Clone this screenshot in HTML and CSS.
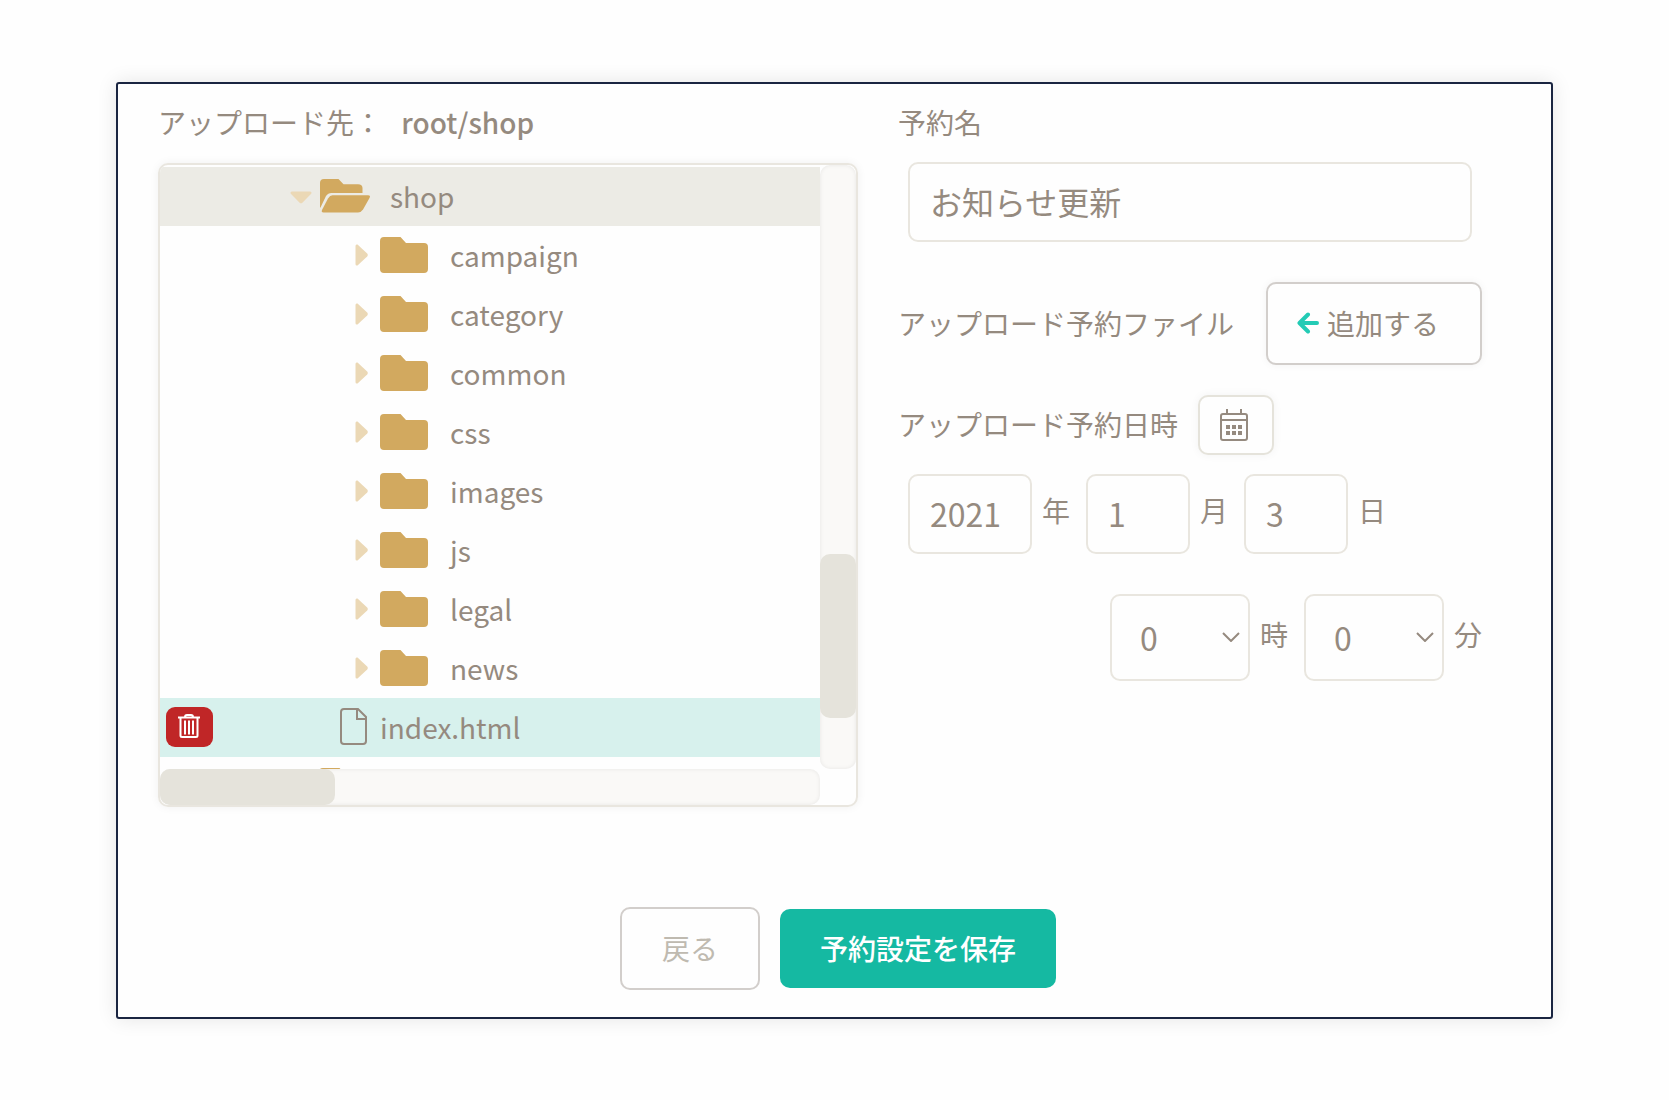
FILE: index.html
```html
<!DOCTYPE html>
<html lang="ja">
<head>
<meta charset="utf-8">
<meta name="viewport" content="width=device-width, initial-scale=1">
<title>アップロード予約</title>
<link rel="stylesheet" href="styles.css">
</head>
<body>
<svg class="sprite" aria-hidden="true">
  <symbol id="folder" viewBox="0 0 48 36"><path d="M4 0H20.500L26 6H44Q48 6 48 10V32Q48 36 44 36H4Q0 36 0 32V4Q0 0 4 0Z"/></symbol>
  <symbol id="folder-open" viewBox="0 0 52 34"><path d="M5 0H19.500L24.500 5.200H39Q43.500 5.200 43.500 9V14H12.500Q9 14 7 17L1.500 28.500Q1 29 1 28V4Q1 0 5 0Z"/><path d="M13.500 16.200H49Q52 16.200 50.500 19L44 30.500Q42 33.500 39 33.500H4.500Q2 33.500 3 31L9 19.500Q11 16.200 13.500 16.200Z"/></symbol>
  <symbol id="caret-right" viewBox="0 0 13 22"><path d="M2.500 .6L12.200 9.600Q13.400 11 12.200 12.400L2.500 21.400Q.5 22 .5 20V2Q.5 0 2.500 .6Z"/></symbol>
  <symbol id="caret-down" viewBox="0 0 22 13"><path d="M.6 2.500L9.600 11.700Q11 13 12.400 11.700L21.400 2.500Q22 .5 20 .5H2Q0 .5 .6 2.500Z"/></symbol>
</svg>
<main class="dialog">
  <form class="form">
    <div class="columns">
      <section class="destination">
        <h1 class="heading">アップロード先： <strong class="path">root/shop</strong></h1>
        <div class="tree">
          <ul class="rows">
            <li class="row row-open"><svg class="caret-down"><use href="#caret-down"/></svg><svg class="folder-open"><use href="#folder-open"/></svg>shop</li>
            <li class="row row-child"><svg class="caret"><use href="#caret-right"/></svg><svg class="folder"><use href="#folder"/></svg>campaign</li>
            <li class="row row-child"><svg class="caret"><use href="#caret-right"/></svg><svg class="folder"><use href="#folder"/></svg>category</li>
            <li class="row row-child"><svg class="caret"><use href="#caret-right"/></svg><svg class="folder"><use href="#folder"/></svg>common</li>
            <li class="row row-child"><svg class="caret"><use href="#caret-right"/></svg><svg class="folder"><use href="#folder"/></svg>css</li>
            <li class="row row-child"><svg class="caret"><use href="#caret-right"/></svg><svg class="folder"><use href="#folder"/></svg>images</li>
            <li class="row row-child"><svg class="caret"><use href="#caret-right"/></svg><svg class="folder"><use href="#folder"/></svg>js</li>
            <li class="row row-child"><svg class="caret"><use href="#caret-right"/></svg><svg class="folder"><use href="#folder"/></svg>legal</li>
            <li class="row row-child"><svg class="caret"><use href="#caret-right"/></svg><svg class="folder"><use href="#folder"/></svg>news</li>
            <li class="row row-file">
              <button type="button" class="delete" aria-label="削除"><svg class="trash" viewBox="0 0 22 24"><path d="M0 3.500H22M7 3Q7 1 9 1H13Q15 1 15 3M2.500 3.500V21.500Q2.500 23 4 23H18Q19.500 23 19.500 21.500V3.500M7 6.500V20.500M11 6.500V20.500M15 6.500V20.500"/></svg></button>
              <svg class="file" viewBox="0 0 27 37"><path d="M4 1H18L26 9V33Q26 36 23 36H4Q1 36 1 33V4Q1 1 4 1ZM17 1V11H26"/></svg>index.html
            </li>
            <li class="row row-next"><svg class="folder"><use href="#folder"/></svg></li>
          </ul>
          <div class="track track-y"><div class="thumb thumb-y"></div></div>
          <div class="track track-x"><div class="thumb thumb-x"></div></div>
        </div>
      </section>
      <section class="settings">
        <label class="heading" for="name">予約名</label>
        <input class="field name" id="name" type="text" value="お知らせ更新">
        <div class="line line-files">
          <span>アップロード予約ファイル</span>
          <button type="button" class="button add"><svg class="arrow" viewBox="0 0 22 22"><path d="M11 2.500L2.500 11L11 19.500M3 11H20"/></svg>追加する</button>
        </div>
        <div class="line line-date">
          <span>アップロード予約日時</span>
          <button type="button" class="calendar" aria-label="カレンダー"><svg class="calendar-icon" viewBox="0 0 28 32"><path class="calendar-frame" d="M3 5H25Q27 5 27 7V29Q27 31 25 31H3Q1 31 1 29V7Q1 5 3 5ZM1 11H27M7 0V5M21 0V5"/><path d="M6 16h4v4h-4zM12 16h4v4h-4zM18 16h4v4h-4zM6 22h4v4h-4zM12 22h4v4h-4zM18 22h4v4h-4z"/></svg></button>
        </div>
        <div class="units units-date">
          <input class="field year" id="year" type="text" value="2021"><label for="year">年</label>
          <input class="field day" id="month" type="text" value="1"><label for="month">月</label>
          <input class="field day" id="day" type="text" value="3"><label for="day">日</label>
        </div>
        <div class="units units-time">
          <div class="picker"><select class="field select" id="hour"><option>0</option></select><svg class="chevron" viewBox="0 0 18 10"><path d="M1 1L9 9L17 1"/></svg></div><label for="hour">時</label>
          <div class="picker"><select class="field select" id="minute"><option>0</option></select><svg class="chevron" viewBox="0 0 18 10"><path d="M1 1L9 9L17 1"/></svg></div><label for="minute">分</label>
        </div>
      </section>
    </div>
    <footer class="actions">
      <button type="button" class="button back">戻る</button>
      <button type="submit" class="save">予約設定を保存</button>
    </footer>
  </form>
</main>
</body>
</html>
```
FILE: styles.css
```css
* { box-sizing: border-box; }

body {
  margin: 0;
  padding: 82px 116px 80px;
  background: #fefefe;
  color: #958a7f;
  font: 28px/40px "Noto Sans CJK JP", sans-serif;
}

button, input, select { font: inherit; color: inherit; }
button { display: flex; align-items: center; justify-content: center; padding: 0 0 2px; background: #fefefe; cursor: pointer; }
svg { display: block; flex: none; }
.sprite { display: none; }

.dialog {
  padding: 18px 69px 27px 40px;
  border: 2px solid #1a2541;
  border-radius: 3px;
  box-shadow: 0 0 20px rgba(0, 0, 0, .1);
}

.columns {
  display: grid;
  grid-template-columns: minmax(0, 175fr) minmax(0, 146fr);
  gap: 40px;
}

.heading { display: block; margin: 0; font-size: 28px; font-weight: 400; line-height: 40px; }
.path { margin-left: 13px; font-weight: 500; }

/* File tree */
.tree {
  display: grid;
  grid-template: 604px 36px / minmax(0, 1fr) 36px;
  margin-top: 21px;
  overflow: hidden;
  border: 2px solid #e9e6df;
  border-radius: 10px;
  box-shadow: 0 0 10px rgba(0, 0, 0, .06);
}
.rows { margin: 0; padding: 2px 0 0; overflow: hidden; list-style: none; }
.row { display: flex; align-items: center; height: 59px; padding-bottom: 2px; }
.row-open { padding-left: 130px; background: #ecebe5; }
.row-child { padding-left: 195px; }
.row-file { padding-left: 6px; background: #d7f1ed; }
.row-next { padding-left: 159px; }
.caret-down { width: 22px; height: 13px; margin: 4px 7px 0 0; fill: #ebd8b5; }
.caret { width: 13px; height: 22px; margin-right: 12px; fill: #ebd8b5; }
.folder-open { width: 52px; height: 34px; margin-right: 19px; fill: #d2a95f; }
.folder { width: 48px; height: 36px; margin-right: 22px; fill: #d2a95f; }
.delete { width: 47px; height: 40px; margin-right: 127px; padding-right: 2px; border: 0; border-radius: 9px; background: #c02627; }
.trash { width: 22px; height: 24px; fill: none; stroke: #fff; stroke-width: 2; }
.file { width: 27px; height: 37px; margin-right: 13px; fill: none; stroke: #958a7f; stroke-width: 2; }

.track { border-radius: 10px; background: #faf9f7; box-shadow: inset 0 0 4px rgba(0, 0, 0, .08); }
.track-y { padding-top: 389px; }
.thumb { border-radius: 10px; background: #e5e3db; }
.thumb-y { height: 164px; }
.thumb-x { width: 175px; height: 36px; }

/* Settings */
.field { height: 80px; padding: 0 20px 2px; border: 2px solid #e9e6df; border-radius: 10px; background: #fefefe; font-size: 32px; outline: 0; }
.name { display: block; width: calc(100% - 20px); margin: 20px 10px 40px; }
.line { display: flex; align-items: center; }
.line span { padding-bottom: 2px; }
.line-files { justify-content: space-between; }
.button { height: 83px; border: 2px solid #d2cecb; border-radius: 10px; }
.add { width: 216px; padding-right: 12px; box-shadow: 0 0 8px rgba(0, 0, 0, .05); }
.arrow { width: 22px; height: 22px; margin-right: 8px; fill: none; stroke: #23cbb5; stroke-width: 4; stroke-linecap: round; stroke-linejoin: round; }
.line-date { gap: 20px; margin-top: 30px; }
.calendar { width: 76px; height: 60px; padding: 0 4px 0 0; border: 2px solid #e5e3db; border-radius: 10px; box-shadow: 0 0 10px rgba(0, 0, 0, .05); }
.calendar-icon { width: 28px; height: 32px; fill: #958a7f; }
.calendar-frame { fill: none; stroke: #958a7f; stroke-width: 2; }

.units { display: flex; align-items: center; }
.units label { margin: 0 16px 8px 10px; }
.units-date { margin: 19px 0 0 10px; }
.year { width: 124px; }
.day { width: 104px; }
.units-time { justify-content: flex-end; margin-top: 40px; }
.units-time label:last-child { margin-right: 0; }
.picker { display: grid; align-items: center; }
.picker > * { grid-area: 1 / 1; }
.select { width: 140px; height: 87px; padding: 0 28px 2px; appearance: none; }
.chevron { justify-self: end; width: 18px; height: 10px; margin: 0 10px 2px 0; fill: none; stroke: #958a7f; stroke-width: 2; pointer-events: none; }

.actions { display: flex; align-items: center; justify-content: center; gap: 20px; margin-top: 100px; padding-left: 36px; }
.back { width: 140px; color: #bfbab0; }
.save { width: 276px; height: 79px; border: 0; border-radius: 10px; background: #15b9a2; color: #fff; font-weight: 500; }
```
